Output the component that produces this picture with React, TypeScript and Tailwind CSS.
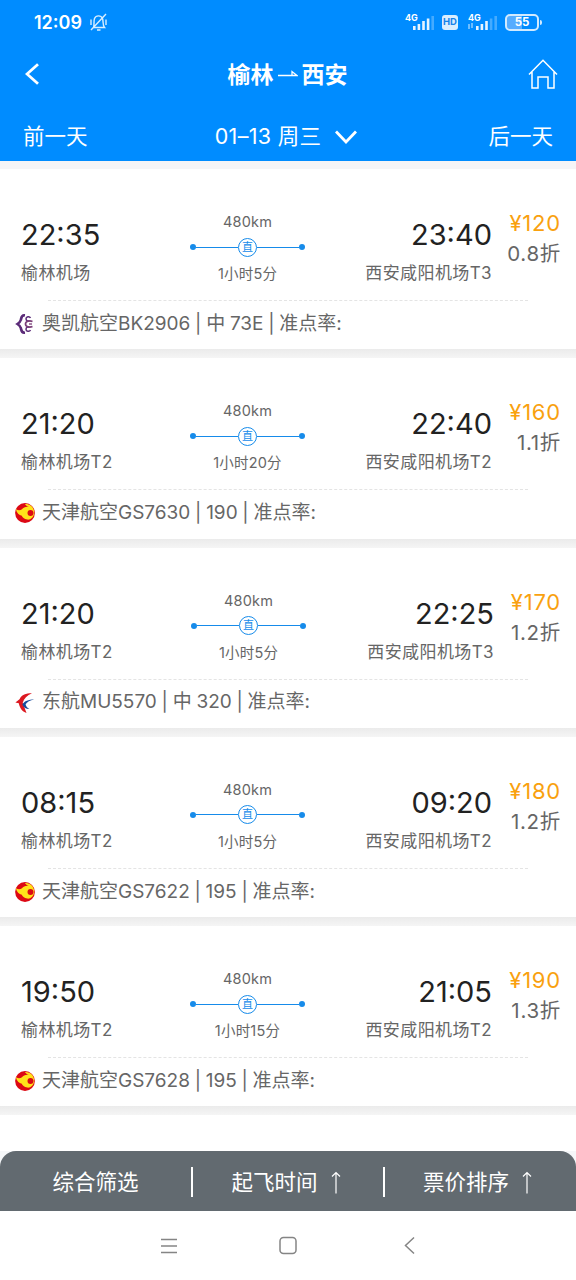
type Airline = "okair" | "tianjin" | "eastern";

type Flight = {
  depart: string;
  arrive: string;
  from: string;
  to: string;
  duration: string;
  price: number;
  discount: string;
  airline: Airline;
  info: string;
  cols: string;
};

const COLS = "grid-cols-[190px_115px_187px_1fr]";
const COLS_WIDE = "grid-cols-[191px_115px_188px_1fr]";

const flights: Flight[] = [
  { depart: "22:35", arrive: "23:40", from: "榆林机场", to: "西安咸阳机场T3", duration: "1小时5分", price: 120, discount: "0.8折", airline: "okair", info: "奥凯航空BK2906 | 中 73E | 准点率:", cols: COLS },
  { depart: "21:20", arrive: "22:40", from: "榆林机场T2", to: "西安咸阳机场T2", duration: "1小时20分", price: 160, discount: "1.1折", airline: "tianjin", info: "天津航空GS7630 | 190 | 准点率:", cols: COLS },
  { depart: "21:20", arrive: "22:25", from: "榆林机场T2", to: "西安咸阳机场T3", duration: "1小时5分", price: 170, discount: "1.2折", airline: "eastern", info: "东航MU5570 | 中 320 | 准点率:", cols: COLS_WIDE },
  { depart: "08:15", arrive: "09:20", from: "榆林机场T2", to: "西安咸阳机场T2", duration: "1小时5分", price: 180, discount: "1.2折", airline: "tianjin", info: "天津航空GS7622 | 195 | 准点率:", cols: COLS },
  { depart: "19:50", arrive: "21:05", from: "榆林机场T2", to: "西安咸阳机场T2", duration: "1小时15分", price: 190, discount: "1.3折", airline: "tianjin", info: "天津航空GS7628 | 195 | 准点率:", cols: COLS },
];

const AirlineLogo = ({ airline }: { airline: Airline }) => {
  if (airline === "okair") {
    return (
      <svg width="20" height="20" viewBox="0 0 20 20" fill="none" stroke="#5b2a78">
        <path d="M10 1.300C6 1 6.500 4 5.800 6C5.200 8 4 9 2.500 10C4 11 5.200 12 5.800 14C6.500 16 6 19 10 18.700" strokeWidth="2.600" />
        <path d="M14.500 6.500C13.500 7.800 11 6.800 11 4.800C11 2.500 14.500 1.800 15.500 4M14.500 13.500C13.500 12.200 11 13.200 11 15.200C11 17.500 14.500 18.200 15.500 16" strokeWidth="1.500" />
        <path d="M17.500 7.500C14.500 6.300 10.500 7.200 10.500 10C10.500 12.800 14.500 13.700 17.500 12.500" stroke="#7b3f78" strokeWidth="1.700" />
        <path d="M17 10H14" stroke="#7b3f78" strokeWidth="1.300" />
      </svg>
    );
  }
  if (airline === "eastern") {
    return (
      <svg width="20" height="20" viewBox="0 0 20 20">
        <path d="M17 .3C10.500 .3 7 1.500 4.500 6.300L.4 9.500L3.800 10.300C4.500 14.500 7 18.800 11.500 20L7.700 9.800C9 5.500 12 2.500 17 .3Z" fill="#dc1820" />
        <path d="M19.200 6.400C13.500 6.400 9.500 7.800 7.300 11.500C8.800 14.700 10.800 15.900 14.500 16C12 14.500 10.800 13 10.600 11.200C12 8.800 15 7.300 19.200 6.400Z" fill="#174c9c" />
      </svg>
    );
  }
  return (
    <svg width="20" height="20" viewBox="0 0 20 20">
      <circle cx="10" cy="10" r="9.900" fill="#dc0814" />
      <path d="M.8 6C3 7.800 5.200 7.600 7 6.200C8.300 4.200 11 3.300 13.800 3.800C11.500 3 10.500 2.200 10 1C15.800 .8 19 4.700 19.200 9.500C19 14.500 15.500 17 12.300 16.600C9 16.200 7.500 14.300 6.800 12.800C4 12.300 1.800 10 .8 6Z" fill="#ffe21a" />
      <circle cx="15.500" cy="10" r="3" fill="#dc0814" />
    </svg>
  );
};

const SignalBars = ({ level }: { level: number }) => (
  <svg width="21" height="14" viewBox="0 0 21 14" fill="#e6f4ff">
    {[4, 6, 9, 11.5, 14].map((h, i) => (
      <rect key={h} x={i * 4.6} y={14 - h} width="2.600" height={h} opacity={i < level ? 1 : 0.3} />
    ))}
  </svg>
);

const StatusBar = () => (
  <div className="flex h-[45px] items-center pl-[34px] pr-[34px] text-white">
    <span className="text-[18px] font-semibold leading-none">12:09</span>
    <svg className="ml-[7px]" width="19" height="19" viewBox="0 0 19 19" fill="none" stroke="#d9eeff" strokeWidth="1.400">
      <path d="M4.500 14.500C5.500 12.500 4.500 8 5.500 5.500C7 2 12 2 13.500 5.500C14.500 8 13.500 12.500 15.500 14.500H4.500M8 17H11.500M17 1L2 17M2 6.500V12M17 6.500V12" />
    </svg>
    <div className="ml-auto flex items-center">
      <div className="relative pl-[8px]">
        <span className="absolute -top-[3px] left-0 text-[9px] font-bold leading-none">4G</span>
        <SignalBars level={4} />
      </div>
      <span className="ml-[8px] flex h-[15px] w-[16px] items-center justify-center rounded-[3px] bg-[#d9eeff] text-[9.500px] font-bold text-[#1682ea]">HD</span>
      <div className="relative ml-[10px] pl-[8px]">
        <span className="absolute -top-[3px] left-0 text-[9px] font-bold leading-none">4G</span>
        <svg className="absolute bottom-[1px] left-0" width="6" height="6" viewBox="0 0 6 6" stroke="#d9eeff">
          <path d="M1 1V6M4 0V5" fill="none" />
        </svg>
        <SignalBars level={3} />
      </div>
      <div className="ml-[8px] flex h-[17px] w-[34px] items-center justify-center rounded-[5px] border-2 border-[#d0eaff] bg-[linear-gradient(to_right,#55acff_50%,#008cff_50%)] text-[11.500px] font-bold">55</div>
      <div className="ml-px h-[5px] w-[2px] rounded-r bg-[#d0eaff]" />
    </div>
  </div>
);

const Header = () => (
  <header className="h-[161px] bg-[#008cff] text-white">
    <StatusBar />
    <div className="flex h-[58px] items-center justify-between pl-[25px] pr-[18px]">
      <svg width="30" height="22" viewBox="0 0 30 22" fill="none" stroke="white" strokeWidth="2.800">
        <path d="M13 1.200L2 11L13 20.800" />
      </svg>
      <h1 className="mr-[8px] flex items-center pt-[2px] text-[23px] font-bold">
        榆林
        <svg className="mx-[4px]" width="20" height="12" viewBox="0 0 20 12" fill="none" stroke="white" strokeWidth="1.300">
          <path d="M0 6.500H19L14 2.500V6.500" />
        </svg>
        西安
      </h1>
      <svg width="30" height="31" viewBox="0 0 30 31" fill="none" stroke="white" strokeWidth="1.500">
        <path d="M1 15.500L15 1.200L29 15.500M4 13V29H10V18H20V29H26V13" />
      </svg>
    </div>
    <div className="flex h-[58px] items-center justify-between pl-[23px] pr-[23px] pt-[9px] text-[21.500px]">
      <span>前一天</span>
      <span className="mr-[4px] flex items-center">
        <span className="tracking-[0.300px]">01–13 周三</span>
        <svg className="ml-[14px]" width="22" height="14" viewBox="0 0 22 14" fill="none" stroke="white" strokeWidth="2.800">
          <path d="M1 1.500L11 12L21 1.500" />
        </svg>
      </span>
      <span>后一天</span>
    </div>
  </header>
);

const Route = ({ duration }: { duration: string }) => (
  <div className="flex flex-col items-center text-[14.500px] text-[#666]">
    <span className="mt-[5px] h-[20px] leading-[20px] tracking-[0.200px]">480km</span>
    <div className="mt-[5px] flex h-[20px] w-full items-center">
      <i className="size-[6px] rounded-full bg-[#168bea]" />
      <i className="h-px flex-1 bg-[#168bea]" />
      <span className="flex size-[19px] items-center justify-center rounded-full border border-[#168bea] text-[11px] leading-none text-[#168bea]">直</span>
      <i className="h-px flex-1 bg-[#168bea]" />
      <i className="size-[6px] rounded-full bg-[#168bea]" />
    </div>
    <span className="mt-[7px] h-[20px] whitespace-nowrap text-[14.500px] leading-[20px] tracking-[0.200px]">{duration}</span>
  </div>
);

const FlightCard = ({ flight }: { flight: Flight }) => (
  <li className="h-[189.300px]">
    <div className="h-[180.300px] bg-white pt-[38px]">
      <div className={`grid h-[93px] ${flight.cols}`}>
        <div className="pl-[21px]">
          <p className="mt-[8px] h-[40px] text-[29px] leading-[40px] text-[#222]">{flight.depart}</p>
          <p className="mt-[6px] h-[24px] text-[17px] leading-[24px] tracking-[0.400px] text-[#666]">{flight.from}</p>
        </div>
        <Route duration={flight.duration} />
        <div className="text-right">
          <p className="mt-[8px] h-[40px] text-[29px] leading-[40px] text-[#222]">{flight.arrive}</p>
          <p className="mt-[6px] h-[24px] whitespace-nowrap text-[17px] leading-[24px] tracking-[0.400px] text-[#666]">{flight.to}</p>
        </div>
        <div className="pr-[15px] text-right">
          <p className="mt-[1px] h-[30px] text-[22px] leading-[30px] tracking-[0.800px] text-[#f9a10f]">¥{flight.price}</p>
          <p className="mt-px h-[30px] text-[20.500px] leading-[30px] tracking-[0.700px] text-[#666]">{flight.discount}</p>
        </div>
      </div>
      <div className="mx-[48px] border-t border-dashed border-[#e4e4e4]" />
      <div className="flex h-[46px] items-center pl-[15px] text-[19px] text-[#666]">
        <AirlineLogo airline={flight.airline} />
        <span className="ml-[7px] [word-spacing:-0.600px]">{flight.info}</span>
      </div>
    </div>
    <div className="h-[9px] bg-gradient-to-b from-[#ebebeb] to-[#f5f5f5]" />
  </li>
);

const UpArrow = () => (
  <svg className="ml-[13px]" width="10" height="23" viewBox="0 0 10 23" fill="none" stroke="white" strokeWidth="1.200">
    <path d="M5 22.500V1.500M1 5.500L5 1.500L9 5.500" />
  </svg>
);

const FilterBar = () => (
  <div className="bg-[#f5f7f9]">
    <div className="grid h-[60px] grid-cols-[191px_2px_190px_2px_1fr] items-center rounded-t-[16px] bg-[#626a70] pt-px text-[21.500px] text-white">
      <button className="pt-px">综合筛选</button>
      <i className="h-[30px] w-[1.500px] bg-white" />
      <button className="flex items-center justify-center pr-[4px] pt-px">起飞时间<UpArrow /></button>
      <i className="h-[30px] w-[1.500px] bg-white" />
      <button className="flex items-center justify-center pr-[6px] pt-px">票价排序<UpArrow /></button>
    </div>
  </div>
);

const NavBar = () => (
  <nav className="flex h-[69px] items-center bg-white pl-[160px]">
    <svg width="256" height="20" viewBox="0 0 256 20" fill="none" stroke="#858585" strokeWidth="1.500">
      <path d="M1 3.500H17M1 10H17M1 16.500H17M254 1.500L245.500 9.500L254 17.500" />
      <rect x="120" y="1.500" width="16" height="16" rx="3.500" />
    </svg>
  </nav>
);

export default function App() {
  return (
    <div className="flex h-[1280px] w-[576px] flex-col overflow-hidden bg-white font-['Inter','Noto_Sans_CJK_SC',sans-serif]">
      <Header />
      <div className="h-[8px] bg-[#f5f5f7]" />
      <ul className="h-[982px]">
        {flights.map((flight) => (
          <FlightCard key={flight.info} flight={flight} />
        ))}
      </ul>
      <FilterBar />
      <NavBar />
    </div>
  );
}
